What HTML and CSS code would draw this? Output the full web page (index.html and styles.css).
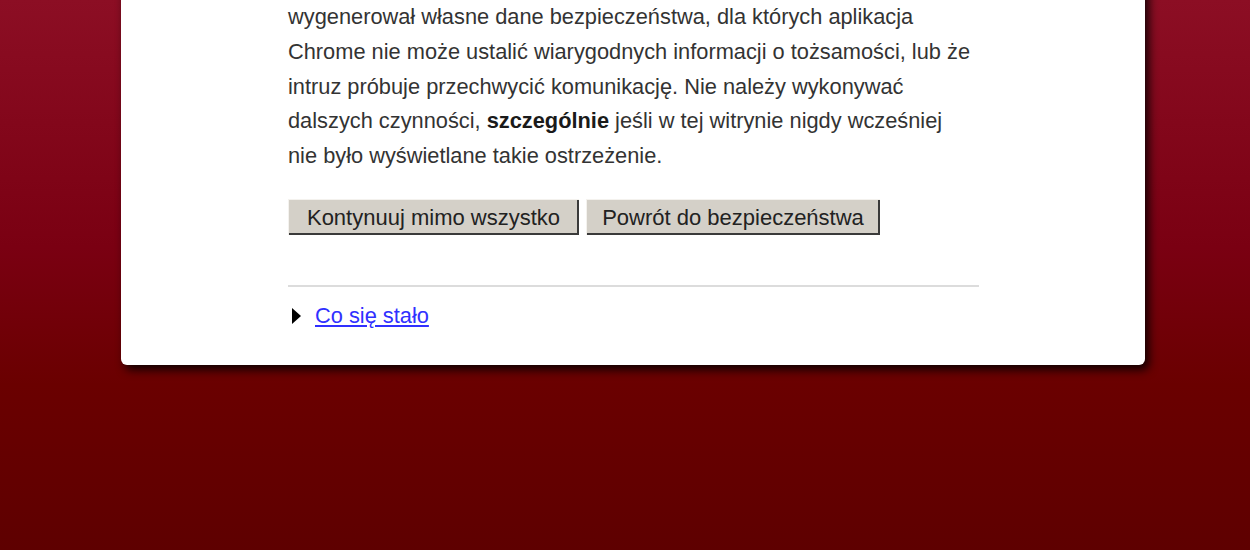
FILE: index.html
```html
<!DOCTYPE html>
<html lang="pl">
<head>
<meta charset="utf-8">
<title>Błąd certyfikatu SSL</title>
<link rel="stylesheet" href="styles.css">
</head>
<body>
<div class="page">
  <div class="card">
    <div class="content">
      <p class="main-text"><span class="ln">wygenerował własne dane bezpieczeństwa, dla których aplikacja</span> <span class="ln">Chrome nie może ustalić wiarygodnych informacji o tożsamości, lub że</span> <span class="ln">intruz próbuje przechwycić komunikację. Nie należy wykonywać</span> <span class="ln">dalszych czynności, <b>szczególnie</b> jeśli w tej witrynie nigdy wcześniej</span> <span class="ln">nie było wyświetlane takie ostrzeżenie.</span></p>
      <div class="buttons">
        <button class="btn btn-proceed">Kontynuuj mimo wszystko</button>
        <button class="btn btn-back">Powrót do bezpieczeństwa</button>
      </div>
      <hr class="sep">
      <div class="more">
        <span class="arrow"></span>
        <a href="#" class="more-link">Co się stało</a>
      </div>
    </div>
  </div>
</div>
</body>
</html>
```

FILE: styles.css
```css
html, body {
  margin: 0;
  padding: 0;
  height: 100%;
}
body {
  background: linear-gradient(to bottom, #8c0e24 0%, #7a0012 45%, #6a0000 70%, #5e0000 100%);
  font-family: "Liberation Sans", Arial, sans-serif;
  color: #333;
  overflow: hidden;
}
.page {
  padding-left: 121px;
}
.card {
  width: 1024px;
  margin-top: -30px;
  padding-top: 30px;
  background: #fff;
  border-radius: 0 0 6px 6px;
  box-shadow: 4px 5px 10px rgba(0, 0, 0, 0.85);
}
.content {
  margin-left: 167px;
  width: 691px;
  padding-bottom: 34px;
}
.main-text {
  margin: 0;
  font-size: 21.8px;
  line-height: 34.8px;
  width: 700px;
}
.main-text .ln {
  display: block;
  white-space: nowrap;
}
.main-text b {
  color: #1a1a1a;
}
.buttons {
  display: flex;
  gap: 7px;
  margin-top: 25px;
}
.btn {
  font-family: "Liberation Sans", Arial, sans-serif;
  font-size: 22px;
  color: #222;
  height: 36px;
  background: #d4d0c8;
  border: none;
  border-radius: 0;
  box-shadow: inset 1px 1px 0 #f4f2ee, inset -2px -2px 0 #3a3a3a;
  padding: 3px 0 0 0;
  text-align: center;
}
.btn-proceed {
  width: 291px;
}
.btn-back {
  width: 294px;
}
.sep {
  margin: 50px 0 0 0;
  border: none;
  border-top: 2px solid #dcdcdc;
  height: 0;
}
.more {
  display: flex;
  align-items: center;
  gap: 14px;
  margin-top: 14px;
  height: 30px;
}
.arrow {
  width: 0;
  height: 0;
  margin-left: 4px;
  border-top: 8px solid transparent;
  border-bottom: 8px solid transparent;
  border-left: 9px solid #000;
}
.more-link {
  font-size: 21.8px;
  color: #3030ff;
  text-decoration: underline;
}
```
